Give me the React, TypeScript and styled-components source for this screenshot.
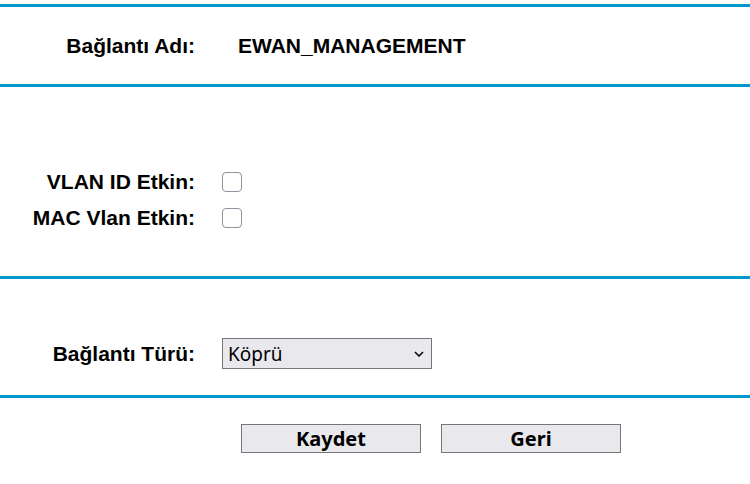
import React from 'react';
import styled, { createGlobalStyle } from 'styled-components';

const GlobalStyle = createGlobalStyle`
  html, body {
    margin: 0;
    padding: 0;
    background: #ffffff;
  }
  body {
    font-family: "Liberation Sans", Arial, sans-serif;
    color: #000000;
  }
`;

const Page = styled.div`
  width: 750px;
  padding-top: 4px;
`;

const Section = styled.section<{ $top: number; $bottom: number }>`
  border-top: 3px solid #0099cc;
  padding: ${(p) => p.$top}px 0 ${(p) => p.$bottom}px;
  display: flex;
  flex-direction: column;
`;

const BottomRule = styled.div`
  border-top: 3px solid #0099cc;
`;

const Row = styled.div<{ $gap: number; $height: number }>`
  display: grid;
  grid-template-columns: 195px auto;
  column-gap: ${(p) => p.$gap}px;
  align-items: center;
  height: ${(p) => p.$height}px;
`;

const Label = styled.div`
  text-align: right;
  font-family: "Liberation Sans", Arial, sans-serif;
  font-weight: bold;
  font-size: 21px;
  line-height: 24px;
  white-space: nowrap;
`;

const Value = styled.div`
  font-family: "Liberation Sans", Arial, sans-serif;
  font-weight: bold;
  font-size: 21px;
  line-height: 24px;
`;

const Check = styled.input.attrs({ type: 'checkbox' })`
  appearance: none;
  margin: 0;
  width: 20px;
  height: 20px;
  border: 1px solid #8f8f9d;
  border-radius: 4px;
  background: #ffffff;
  box-sizing: border-box;
`;

const SelectWrap = styled.div`
  position: relative;
  width: 210px;
  height: 31px;
`;

const Select = styled.select`
  appearance: none;
  width: 210px;
  height: 31px;
  margin: 0;
  padding: 0 0 0 5px;
  box-sizing: border-box;
  border: 1px solid #767676;
  border-radius: 0;
  background: #e9e9ed;
  font-family: "Noto Sans", "Open Sans", sans-serif;
  font-size: 19px;
  color: #000000;
`;

const Chevron = styled.svg`
  position: absolute;
  right: 8px;
  top: 13px;
  pointer-events: none;
`;

const Actions = styled.div`
  display: flex;
  gap: 20px;
  padding: 26px 0 0 241px;
`;

const Button = styled.button`
  width: 180px;
  height: 29px;
  margin: 0;
  padding: 0;
  box-sizing: border-box;
  border: 1px solid #767676;
  border-radius: 0;
  background: #e9e9ed;
  font-family: "Noto Sans", "Open Sans", sans-serif;
  font-weight: bold;
  font-size: 20px;
  line-height: 27px;
  color: #000000;
`;

export default function App() {
  return (
    <>
      <GlobalStyle />
      <Page>
        <Section $top={27} $bottom={26}>
          <Row $gap={43} $height={24}>
            <Label>Bağlantı Adı:</Label>
            <Value>EWAN_MANAGEMENT</Value>
          </Row>
        </Section>
        <Section $top={77} $bottom={40}>
          <Row $gap={27} $height={36}>
            <Label>VLAN ID Etkin:</Label>
            <Check />
          </Row>
          <Row $gap={27} $height={36}>
            <Label>MAC Vlan Etkin:</Label>
            <Check />
          </Row>
        </Section>
        <Section $top={59} $bottom={26}>
          <Row $gap={27} $height={31}>
            <Label>Bağlantı Türü:</Label>
            <SelectWrap>
              <Select defaultValue="bridge">
                <option value="bridge">Köprü</option>
              </Select>
              <Chevron width="10" height="6" viewBox="0 0 10 6">
                <path d="M1 1 L5 5 L9 1" fill="none" stroke="#000" strokeWidth="1.5" />
              </Chevron>
            </SelectWrap>
          </Row>
        </Section>
        <BottomRule />
        <Actions>
          <Button>Kaydet</Button>
          <Button>Geri</Button>
        </Actions>
      </Page>
    </>
  );
}
